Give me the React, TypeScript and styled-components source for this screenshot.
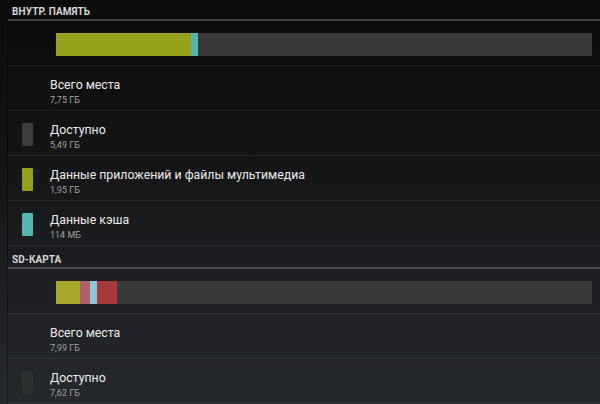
import { createGlobalStyle } from "styled-components";
import styled from "styled-components";

const GlobalStyle = createGlobalStyle`
  html, body {
    margin: 0;
    padding: 0;
    background: #0b0b0b;
  }
  body {
    font-family: Roboto, "Noto Sans", "Liberation Sans", sans-serif;
    overflow: hidden;
  }
`;

type Segment = { color: string; width: number };
type Item = { title: string; size: string; swatch?: string };
type Volume = { name: string; bar: Segment[]; items: Item[] };

const volumes: Volume[] = [
  {
    name: "Внутр. память",
    bar: [
      { color: "#97a11b", width: 25.2 },
      { color: "#56b6b3", width: 1.3 },
    ],
    items: [
      { title: "Всего места", size: "7,75 ГБ" },
      { title: "Доступно", size: "5,49 ГБ", swatch: "#3d3d3d" },
      {
        title: "Данные приложений и файлы мультимедиа",
        size: "1,95 ГБ",
        swatch: "#95a11c",
      },
      { title: "Данные кэша", size: "114 МБ", swatch: "#54b5b1" },
    ],
  },
  {
    name: "SD-карта",
    bar: [
      { color: "#a6a82a", width: 4.5 },
      { color: "#b0606b", width: 1.9 },
      { color: "#8cc7da", width: 1.3 },
      { color: "#a63a3c", width: 3.7 },
    ],
    items: [
      { title: "Всего места", size: "7,99 ГБ" },
      { title: "Доступно", size: "7,62 ГБ", swatch: "#2c312f" },
    ],
  },
];

const Screen = styled.div`
  width: 600px;
  height: 404px;
  overflow: hidden;
  background: linear-gradient(
    180deg,
    #0b0b0b 0%,
    #111111 25%,
    #17181a 50%,
    #1e2024 72%,
    #25282d 100%
  );
`;

const List = styled.div`
  margin-top: -2px;
  margin-left: 7px;
  border-left: 1px solid rgba(0, 0, 0, 0.35);
`;

const Header = styled.div`
  height: 23px;
  box-sizing: border-box;
  padding: 8px 0 0 4px;
  border-bottom: 2px solid rgba(255, 255, 255, 0.2);
  color: #d6d6d6;
  font-size: 10px;
  line-height: 12px;
  font-weight: 700;
  text-transform: uppercase;
  letter-spacing: 0.1px;
`;

const BarRow = styled.div`
  height: 45px;
  box-sizing: border-box;
  padding: 12px 8px 0 48px;
  border-bottom: 1px solid rgba(255, 255, 255, 0.07);
`;

const Bar = styled.div`
  display: flex;
  height: 23px;
  background: #3a3a3b;
`;

const BarSegment = styled.div<{ $color: string }>`
  height: 100%;
  background: ${({ $color }) => $color};
`;

const Row = styled.div`
  display: flex;
  align-items: flex-start;
  height: 45px;
  box-sizing: border-box;
  border-bottom: 1px solid rgba(255, 255, 255, 0.07);
`;

const SwatchCell = styled.div`
  width: 42px;
  flex-shrink: 0;
  display: flex;
  padding: 12px 0 0 14px;
  box-sizing: border-box;
`;

const Swatch = styled.div<{ $color?: string }>`
  width: 11px;
  height: 23px;
  border-radius: 1px;
  background: ${({ $color }) => $color ?? "transparent"};
`;

const Text = styled.div`
  display: flex;
  flex-direction: column;
  padding-top: 12px;
`;

const Title = styled.div`
  color: #ececec;
  font-size: 12.3px;
  line-height: 15px;
`;

const Size = styled.div`
  margin-top: 2px;
  color: #a3a3a3;
  font-size: 9px;
  line-height: 11px;
`;

const App = () => {
  return (
    <>
      <GlobalStyle />
      <Screen>
        <List>
          {volumes.map((v) => (
            <section key={v.name}>
              <Header>{v.name}</Header>
              <BarRow>
                <Bar>
                  {v.bar.map((s, i) => (
                    <BarSegment
                      key={i}
                      $color={s.color}
                      style={{ width: `${s.width}%` }}
                    />
                  ))}
                </Bar>
              </BarRow>
              {v.items.map((item) => (
                <Row key={item.title}>
                  <SwatchCell>
                    <Swatch $color={item.swatch} />
                  </SwatchCell>
                  <Text>
                    <Title>{item.title}</Title>
                    <Size>{item.size}</Size>
                  </Text>
                </Row>
              ))}
            </section>
          ))}
        </List>
      </Screen>
    </>
  );
};

export default App;
